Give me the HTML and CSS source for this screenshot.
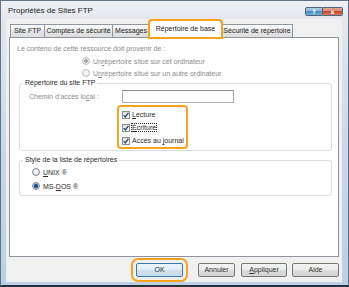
FILE: index.html
```html
<!DOCTYPE html>
<html lang="fr">
<head>
<meta charset="utf-8">
<title>Propriétés de Sites FTP</title>
<link rel="stylesheet" href="styles.css">
</head>
<body>
<div class="window">
  <div class="titlebar">
    <span class="title">Propriétés de Sites FTP</span>
    <span class="cap-btns"><span class="cap help">?</span><span class="cap close">x</span></span>
  </div>
  <div class="client">
    <div class="tabs">
      <div class="tab t1">Site FTP</div>
      <div class="tab t2">Comptes de sécurité</div>
      <div class="tab t3">Messages</div>
      <div class="tab t4 active">Répertoire de base</div>
      <div class="tab t5">Sécurité de répertoire</div>
    </div>
    <div class="panel">
      <div class="intro disabled">Le contenu de cette ressource doit provenir de :</div>
      <div class="opt opt-first disabled"><span class="radio dis checked"></span>Un <u>r</u>épertoire situé sur cet ordinateur</div>
      <div class="opt disabled"><span class="radio dis"></span>U<u>n</u> répertoire situé sur un autre ordinateur</div>
      <div class="group g1">
        <div class="group-title">Répertoire du site FTP</div>
        <div class="path-row"><span class="path-label disabled">Chemin d'accès lo<u>c</u>al :</span><span class="input"></span></div>
        <div class="checks">
          <div class="check"><span class="cb"><svg width="6" height="6" viewBox="0 0 6 6"><path d="M0.6 3.1 L2.3 4.9 L5.4 0.8" fill="none" stroke="#23457a" stroke-width="1.3"/></svg></span><span><u>L</u>ecture</span></div>
          <div class="check"><span class="cb"><svg width="6" height="6" viewBox="0 0 6 6"><path d="M0.6 3.1 L2.3 4.9 L5.4 0.8" fill="none" stroke="#23457a" stroke-width="1.3"/></svg></span><span class="focus"><u>É</u>criture</span></div>
          <div class="check"><span class="cb"><svg width="6" height="6" viewBox="0 0 6 6"><path d="M0.6 3.1 L2.3 4.9 L5.4 0.8" fill="none" stroke="#23457a" stroke-width="1.3"/></svg></span><span>Accès au <u>j</u>ournal</span></div>
        </div>
      </div>
      <div class="group g2">
        <div class="group-title">Style de la liste de répertoires</div>
        <div class="opt2"><span class="radio"></span><u>U</u>NIX ®</div>
        <div class="opt2"><span class="radio on"></span>MS-<u>D</u>OS ®</div>
      </div>
    </div>
    <div class="buttons">
      <span class="btn ok">OK</span>
      <span class="btn cancel">Annuler</span>
      <span class="btn apply"><u>A</u>ppliquer</span>
      <span class="btn help-btn">Aide</span>
    </div>
  </div>
</div>
</body>
</html>
```
FILE: styles.css
```css
body {
  margin: 0;
  background: #26323c;
  font-family: "Liberation Sans", Arial, sans-serif;
  font-size: 7px;
  color: #2a2a2a;
}
u { text-decoration: underline; text-underline-offset: 1px; }
.window {
  width: 349px;
  height: 287px;
  box-sizing: border-box;
  border: 1px solid #5f7286;
  border-bottom: 2px solid #25313b;
  background: linear-gradient(#eef0f3, #e2e7ed 22px, #c9d8e9 50%, #bccfe5);
  display: flex;
  flex-direction: column;
}
.titlebar {
  height: 18px;
  flex: none;
  display: flex;
  justify-content: space-between;
  align-items: flex-start;
}
.title {
  font-size: 8px;
  line-height: 10px;
  color: #1b1b1b;
  margin: 5px 0 0 7px;
}
.cap-btns {
  display: flex;
  margin: 6px 5px 0 0;
}
.cap {
  height: 9px;
  box-sizing: border-box;
  border: 1px solid #50657c;
  color: #fff;
  font-family: "DejaVu Sans", sans-serif;
  font-weight: bold;
  font-size: 6px;
  line-height: 7px;
  text-align: center;
}
.help {
  width: 18px;
  border-radius: 2px 0 0 2px;
  background: linear-gradient(#a9cde6, #7fb1d6 50%, #4e8fbf 50%, #6fb1d6);
}
.close {
  width: 20px;
  border-left: none;
  border-radius: 0 2px 2px 0;
  background: linear-gradient(#e8a593, #d6806a 50%, #c24a2f 50%, #d77a5d);
}
.client {
  flex: 1;
  margin: 0 6px 3px 5px;
  background: #f0f0f0;
  display: flex;
  flex-direction: column;
  padding-top: 1px;
}
.tabs {
  display: flex;
  align-items: flex-end;
  height: 17px;
  margin-left: 4px;
}
.tab {
  height: 13px;
  box-sizing: border-box;
  border: 1px solid #8e969f;
  border-bottom: none;
  background: linear-gradient(#f9f9f9, #eeeeee 50%, #e4e4e4 50%, #dedede);
  line-height: 12px;
  text-align: center;
  white-space: nowrap;
  margin-right: -1px;
  color: #222;
}
.t1 { width: 35px; }
.t2 { width: 69px; }
.t3 { width: 38px; }
.t4 { width: 73px; }
.t5 { width: 72px; }
.tab.active {
  height: 18px;
  margin-bottom: -1px;
  background: #fff;
  position: relative;
  z-index: 2;
  line-height: 16px;
  outline: 2px solid #f5a31c;
  outline-offset: -1px;
  border-radius: 3px 3px 0 0;
}
.panel {
  width: 330px;
  height: 220px;
  box-sizing: border-box;
  margin-left: 3px;
  border: 1px solid #8e969f;
  background: #fff;
  padding: 6px 0 0 7px;
}
.disabled { color: #8b8b8b; }
.intro { line-height: 10px; }
.opt {
  height: 12px;
  display: flex;
  align-items: center;
  padding-left: 65px;
}
.opt-first { margin-top: 1px; }
.radio {
  width: 8px;
  height: 8px;
  box-sizing: border-box;
  border-radius: 50%;
  border: 1px solid #7f8a95;
  background: radial-gradient(circle at 50% 45%, #ffffff 0, #e6e6e6 60%, #cfd3d8 100%);
  margin-right: 3px;
  flex: none;
}
.radio.dis {
  border-color: #bdbdbd;
  background: #f4f4f4;
}
.radio.dis.checked {
  background: radial-gradient(circle, #a8a8a8 0, #a8a8a8 1.6px, #f4f4f4 2.2px);
}
.radio.on {
  background: radial-gradient(circle, #1d3f6b 0, #2a5d92 1.8px, #9fc1df 2.6px, #e8eef4 3.2px);
}
.group {
  border: 1px solid #d5dfe5;
  border-radius: 3px;
  margin-right: 6px;
  margin-left: 2px;
}
.group-title {
  width: fit-content;
  line-height: 10px;
  margin-top: -6px;
  padding: 0 2px;
  background: #fff;
  color: #2a2a2a;
}
.g1 {
  margin-top: 4px;
  padding: 0 0 1px 9px;
}
.g1 .group-title { margin-left: -6px; }
.path-row {
  display: flex;
  align-items: center;
  height: 13px;
  margin-top: 2px;
}
.path-label { width: 93px; flex: none; }
.input {
  width: 112px;
  height: 13px;
  box-sizing: border-box;
  border: 1px solid #abadb3;
  border-top-color: #8b8e94;
  background: #fff;
}
.checks {
  width: 71px;
  height: 44px;
  box-sizing: border-box;
  margin: 2px 0 0 88px;
  border: 2px solid #f5a31c;
  border-radius: 4px;
  padding: 1px 0 0 3px;
}
.check {
  height: 13px;
  display: flex;
  align-items: center;
  white-space: nowrap;
}
.cb {
  width: 8px;
  height: 8px;
  box-sizing: border-box;
  border: 1px solid #8e8f8f;
  background: linear-gradient(#dfe3e8, #f7f8f9);
  margin-right: 2px;
  display: flex;
  align-items: center;
  justify-content: center;
  flex: none;
}
.focus { outline: 1px dotted #333; }
.g2 {
  margin-top: 9px;
  padding: 1px 0 2px 12px;
}
.g2 .group-title { margin-left: -9px; margin-top: -7px; }
.opt2 {
  height: 14px;
  display: flex;
  align-items: center;
}
.buttons {
  display: flex;
  justify-content: flex-end;
  margin-top: 6px;
  padding-right: 3px;
}
.btn {
  height: 14px;
  box-sizing: border-box;
  border: 1px solid #777;
  border-radius: 2px;
  background: linear-gradient(#f4f4f4, #ececec 50%, #dedede 50%, #d4d4d4);
  line-height: 12px;
  text-align: center;
  color: #333;
}
.ok {
  width: 47px;
  margin-right: 15px;
  border-color: #3d78a8;
  background: linear-gradient(#eef5fa, #e1ecf5 50%, #cfe0ee 50%, #c6dbec);
  outline: 2px solid #f5a31c;
  outline-offset: 3px;
  border-radius: 2px;
}
.cancel { width: 37px; margin-right: 6px; }
.apply { width: 46px; margin-right: 5px; }
.help-btn { width: 47px; }
```
